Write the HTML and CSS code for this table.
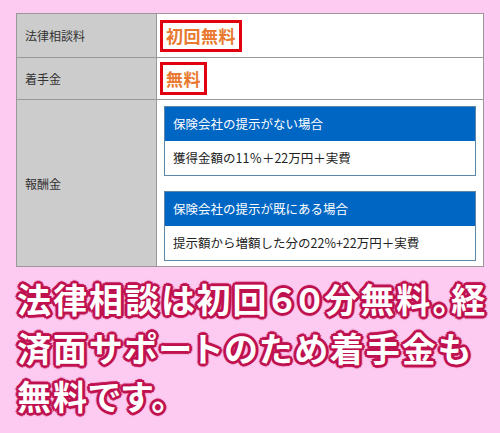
FILE: index.html
```html
<!DOCTYPE html>
<html lang="ja">
<head>
    <meta charset="UTF-8">
    <meta name="viewport" content="width=device-width, initial-scale=1.0">
    <title>費用</title>
    <link rel="stylesheet" href="styles.css">
</head>
<body>
    <table class="fee-table">
        <tr class="row-consult">
            <th>法律相談料</th>
            <td><span class="free">初回無料</span></td>
        </tr>
        <tr class="row-start">
            <th>着手金</th>
            <td><span class="free">無料</span></td>
        </tr>
        <tr class="row-reward">
            <th>報酬金</th>
            <td>
                <div class="case">
                    <div class="case-head">保険会社の提示がない場合</div>
                    <div class="case-body">獲得金額の11％＋22万円＋実費</div>
                </div>
                <div class="case">
                    <div class="case-head">保険会社の提示が既にある場合</div>
                    <div class="case-body">提示額から増額した分の22%+22万円＋実費</div>
                </div>
            </td>
        </tr>
    </table>

    <p class="caption">法律相談は初回６０分無料。経<br>済面サポートのため着手金も<br>無料です。</p>
</body>
</html>
```

FILE: styles.css
```css
body { margin: 0; padding: 13px 16px 0; background-color: #fdcaf2; font-family: "Noto Sans CJK JP", sans-serif; }
.fee-table { width: 468px; border-collapse: collapse; background-color: #fff; border: 1px solid #999; }
.fee-table th, .fee-table td { border: 1px solid #999; text-align: left; vertical-align: middle; }
.fee-table th { width: 131px; padding: 0 0 0 8px; background-color: #cccccc; font-weight: normal; font-size: 12px; color: #333; }
.fee-table td { padding: 0 7px 0 3px; }
.row-consult { height: 44px; }
.row-start { height: 42px; }
.free { display: inline-block; border: 3px solid #e00010; padding: 0 3px; font-size: 17px; line-height: 26px; font-weight: bold; color: #e8792e; letter-spacing: 0.5px; }
.row-start .free { line-height: 27px; }
.row-reward td { padding: 6px 7px 5px 7px; }
.case { border: 1px solid #5f87a8; font-size: 12.5px; }
.case + .case { margin-top: 15px; }
.case-head { height: 34px; line-height: 34px; padding-left: 8px; background-color: #0066c4; color: #fff; }
.case-body { height: 34px; line-height: 34px; padding-left: 8px; color: #222; background-color: #fff; }
.caption { margin: 8px 0 0 1px; font-size: 34px; line-height: 48.5px; font-weight: bold; color: #fff; white-space: nowrap; letter-spacing: 2px; font-feature-settings: "palt";
    text-shadow: 2px 0 0 #c0114f, -2px 0 0 #c0114f, 0 2px 0 #c0114f, 0 -2px 0 #c0114f, 2px 2px 0 #c0114f, -2px -2px 0 #c0114f, 2px -2px 0 #c0114f, -2px 2px 0 #c0114f, 3px 0 1px #c0114f, -3px 0 1px #c0114f, 0 3px 1px #c0114f, 0 -3px 1px #c0114f; }
```
